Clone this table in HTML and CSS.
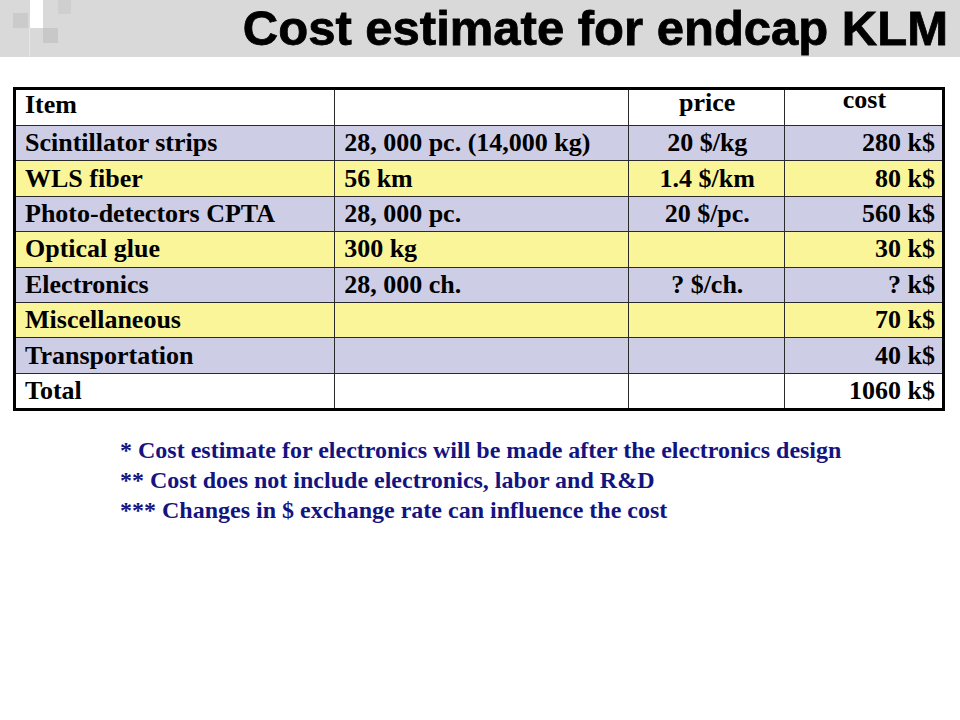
FILE: index.html
```html
<!DOCTYPE html>
<html>
<head>
<meta charset="utf-8">
<link rel="stylesheet" href="styles.css">
</head>
<body>
<header class="band">
  <div class="deco">
    <span class="sq sq-a"></span>
    <span class="sq sq-white"></span>
    <span class="sq sq-b"></span>
    <span class="sq sq-c"></span>
    <span class="edge"></span>
  </div>
  <h1 class="title">Cost estimate for endcap KLM</h1>
</header>

<main class="content">
  <table class="cost">
    <colgroup>
      <col class="c1"><col class="c2"><col class="c3"><col class="c4">
    </colgroup>
    <tr class="head">
      <td class="item-h">Item</td>
      <td></td>
      <td class="center price-h">price</td>
      <td class="center cost-h">cost</td>
    </tr>
    <tr class="lav">
      <td>Scintillator strips</td>
      <td>28, 000 pc. (14,000 kg)</td>
      <td class="center">20 $/kg</td>
      <td class="right">280 k$</td>
    </tr>
    <tr class="yel">
      <td>WLS fiber</td>
      <td>56 km</td>
      <td class="center">1.4 $/km</td>
      <td class="right">80 k$</td>
    </tr>
    <tr class="lav">
      <td>Photo-detectors CPTA</td>
      <td>28, 000 pc.</td>
      <td class="center">20 $/pc.</td>
      <td class="right">560 k$</td>
    </tr>
    <tr class="yel">
      <td>Optical glue</td>
      <td>300 kg</td>
      <td class="center"></td>
      <td class="right">30 k$</td>
    </tr>
    <tr class="lav">
      <td>Electronics</td>
      <td>28, 000 ch.</td>
      <td class="center">? $/ch.</td>
      <td class="right">? k$</td>
    </tr>
    <tr class="yel">
      <td>Miscellaneous</td>
      <td></td>
      <td class="center"></td>
      <td class="right">70 k$</td>
    </tr>
    <tr class="lav">
      <td>Transportation</td>
      <td></td>
      <td class="center"></td>
      <td class="right">40 k$</td>
    </tr>
    <tr class="wht">
      <td>Total</td>
      <td></td>
      <td class="center"></td>
      <td class="right">1060 k$</td>
    </tr>
  </table>

  <div class="notes">
    <p>* Cost estimate for electronics will be made after the electronics design</p>
    <p>** Cost does not include electronics, labor and R&amp;D</p>
    <p>*** Changes in $ exchange rate can influence the cost</p>
  </div>
</main>
</body>
</html>
```

FILE: styles.css
```css
html, body {
  margin: 0;
  padding: 0;
  background: #ffffff;
}

body {
  width: 960px;
  height: 720px;
  overflow: hidden;
}

.band {
  height: 57px;
  background: #d9d9d9;
  display: flex;
  align-items: center;
  justify-content: flex-end;
  position: relative;
  padding-right: 12px;
}

.deco {
  position: absolute;
  left: 0;
  top: 0;
  width: 80px;
  height: 57px;
}

.sq {
  position: absolute;
  display: block;
}

.sq-a {
  left: 13px;
  top: 13px;
  width: 15px;
  height: 15px;
  background: #cbcbcb;
}

.sq-white {
  left: 30px;
  top: 0;
  width: 13px;
  height: 28px;
  background: #ffffff;
}

.sq-b {
  left: 43px;
  top: 28px;
  width: 15px;
  height: 15px;
  background: #c8c8c8;
}

.sq-c {
  left: 58px;
  top: 0;
  width: 13px;
  height: 14px;
  background: #cfcfcf;
}

.edge {
  position: absolute;
  left: 29px;
  top: 28px;
  width: 1px;
  height: 29px;
  background: #e6e6e6;
}

.title {
  margin: 0;
  font-family: "Liberation Sans", Arial, sans-serif;
  font-weight: bold;
  font-size: 49px;
  line-height: 57px;
  color: #000;
  -webkit-text-stroke: 0.8px #000;
  letter-spacing: 0;
}

.content {
  padding: 30px 0 0 13px;
}

.cost {
  border-collapse: collapse;
  width: 932px;
  border: 3px solid #000;
  font-family: "Liberation Serif", "Times New Roman", serif;
  font-weight: bold;
  font-size: 26px;
  color: #000;
}

.c1 { width: 321px; }
.c2 { width: 294px; }
.c3 { width: 157px; }
.c4 { width: 160px; }

.cost td {
  border: 1px solid #2a2a2a;
  height: 34.4px;
  padding: 0 7px 0 9px;
  line-height: 26px;
  white-space: nowrap;
  vertical-align: middle;
}

.cost tr.head td {
  height: 35px;
  vertical-align: top;
  padding-top: 0;
  padding-bottom: 0;
}

.cost tr.head td.item-h { line-height: 30px; }
.cost tr.head td.price-h { line-height: 26px; }
.cost tr.head td.cost-h { line-height: 20px; }

.center { text-align: center; }
.right { text-align: right; }

.lav td { background: #cdcde6; }
.yel td { background: #fbf599; }
.wht td { background: #ffffff; }

.notes {
  margin: 24px 0 0 107px;
  font-family: "Liberation Serif", "Times New Roman", serif;
  font-weight: bold;
  font-size: 24px;
  color: #14147f;
  letter-spacing: 0;
}

.notes p {
  margin: 0;
  line-height: 30px;
  white-space: nowrap;
}
```
